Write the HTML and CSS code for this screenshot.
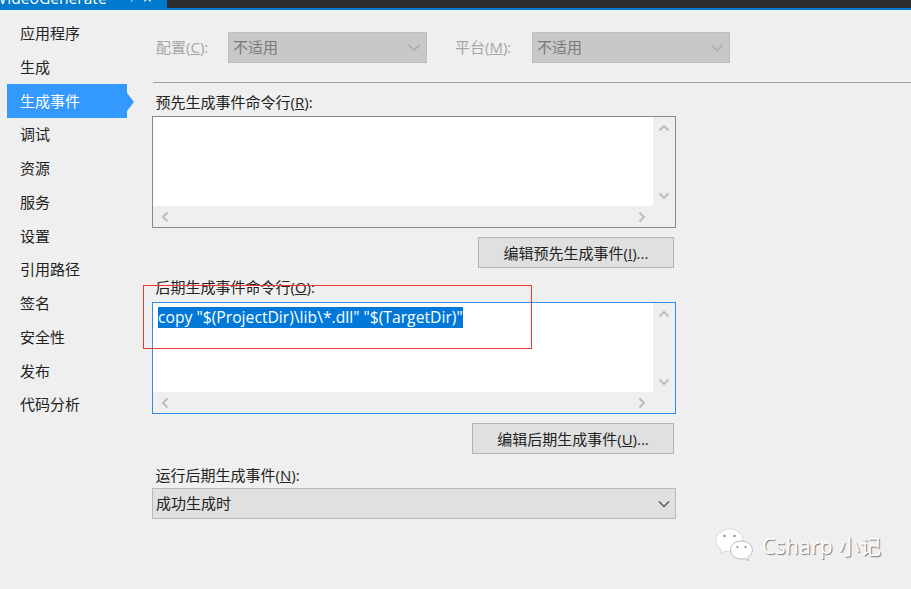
FILE: index.html
```html
<!DOCTYPE html>
<html lang="zh">
<head>
<meta charset="utf-8">
<title>生成事件</title>
<link rel="stylesheet" href="styles.css">
</head>
<body>
<header class="topbar">
  <div class="tab"><span class="tab-text">VideoGenerate</span><span class="tab-pin">⊣</span><span class="tab-close">×</span></div>
</header>
<div class="page">
  <nav class="side">
    <div class="nav-item">应用程序</div>
    <div class="nav-item">生成</div>
    <div class="nav-item active">生成事件</div>
    <div class="nav-item">调试</div>
    <div class="nav-item">资源</div>
    <div class="nav-item">服务</div>
    <div class="nav-item">设置</div>
    <div class="nav-item">引用路径</div>
    <div class="nav-item">签名</div>
    <div class="nav-item">安全性</div>
    <div class="nav-item">发布</div>
    <div class="nav-item">代码分析</div>
  </nav>
  <main class="main">
    <div class="config-row">
      <span class="config-label first">配置(<u>C</u>):</span>
      <div class="select disabled first-select"><span>不适用</span>
        <svg class="chev" width="14" height="8" viewBox="0 0 14 8"><path d="M1.500 1 7 6.500 12.500 1" fill="none" stroke="#aaa" stroke-width="1.300"/></svg></div>
      <span class="config-label second">平台(<u>M</u>):</span>
      <div class="select disabled second-select"><span>不适用</span>
        <svg class="chev" width="14" height="8" viewBox="0 0 14 8"><path d="M1.500 1 7 6.500 12.500 1" fill="none" stroke="#aaa" stroke-width="1.300"/></svg></div>
    </div>
    <div class="rule"></div>
    <div class="form">
      <label class="field-label pre-label">预先生成事件命令行(<u>R</u>):</label>
      <div class="textbox">
        <div class="text-area"></div>
        <div class="vbar">
          <svg width="12" height="8" viewBox="0 0 12 8"><path d="M1.500 6.500 6 2l4.500 4.500" fill="none" stroke="#bdbdbd" stroke-width="2"/></svg>
          <svg width="12" height="8" viewBox="0 0 12 8"><path d="M1.500 1.500 6 6l4.500-4.500" fill="none" stroke="#bdbdbd" stroke-width="2"/></svg>
        </div>
        <div class="hbar">
          <svg width="8" height="12" viewBox="0 0 8 12"><path d="M6.500 1.500 2 6l4.500 4.500" fill="none" stroke="#bdbdbd" stroke-width="2"/></svg>
          <svg width="8" height="12" viewBox="0 0 8 12"><path d="M1.500 1.500 6 6l-4.500 4.500" fill="none" stroke="#bdbdbd" stroke-width="2"/></svg>
        </div>
      </div>
      <div class="btn-row"><button class="btn pre-btn">编辑预先生成事件(<u>I</u>)...</button></div>
      <label class="field-label post-label">后期生成事件命令行(<u>O</u>):</label>
      <div class="textbox focused">
        <div class="text-area"><span class="selected">copy "$(ProjectDir)\lib\*.dll" "$(TargetDir)"</span></div>
        <div class="vbar">
          <svg width="12" height="8" viewBox="0 0 12 8"><path d="M1.500 6.500 6 2l4.500 4.500" fill="none" stroke="#bdbdbd" stroke-width="2"/></svg>
          <svg width="12" height="8" viewBox="0 0 12 8"><path d="M1.500 1.500 6 6l4.500-4.500" fill="none" stroke="#bdbdbd" stroke-width="2"/></svg>
        </div>
        <div class="hbar">
          <svg width="8" height="12" viewBox="0 0 8 12"><path d="M6.500 1.500 2 6l4.500 4.500" fill="none" stroke="#bdbdbd" stroke-width="2"/></svg>
          <svg width="8" height="12" viewBox="0 0 8 12"><path d="M1.500 1.500 6 6l-4.500 4.500" fill="none" stroke="#bdbdbd" stroke-width="2"/></svg>
        </div>
      </div>
      <div class="btn-row"><button class="btn post-btn">编辑后期生成事件(<u>U</u>)...</button></div>
      <label class="field-label run-label">运行后期生成事件(<u>N</u>):</label>
      <div class="select run-select"><span>成功生成时</span>
        <svg class="chev" width="14" height="8" viewBox="0 0 14 8"><path d="M2 1.500 7 6.500 12 1.500" fill="none" stroke="#555" stroke-width="1.300"/></svg></div>
    </div>
  </main>
</div>
<div class="red-box"></div>
<div class="watermark">
  <svg width="41" height="36" viewBox="0 0 40 36">
    <path d="M15 1C7.500 1 1.500 6.200 1.500 12.500c0 3.700 2 6.900 5.200 9l-1 4 4.700-2.500c1.500.4 3 .6 4.600.6 7.500 0 13.500-5.100 13.500-11.100S22.500 1 15 1z" fill="#fff" stroke="#d0d0d0" stroke-width=".7"/>
    <path d="M27 13c-6 0-11 4-11 9s5 9 11 9c1.200 0 2.400-.2 3.500-.5l3.800 2.300-.9-3.500c2.700-1.700 4.500-4.400 4.500-7.300 0-5-5-9-11-9z" fill="#fff" stroke="#a8a8a8" stroke-width=".8"/>
    <circle cx="10" cy="8" r="1.300" fill="#999"/><circle cx="20" cy="8" r="1.300" fill="#999"/>
    <circle cx="23" cy="19" r="1.100" fill="#888"/><circle cx="31" cy="19" r="1.100" fill="#888"/>
  </svg>
  <span class="wm-text">Csharp 小记</span>
</div>
</body>
</html>
```

FILE: styles.css
```css
* { box-sizing: border-box; }
html, body { margin: 0; padding: 0; }
body {
  width: 911px;
  height: 589px;
  overflow: hidden;
  background: #efefef;
  color: #1e1e1e;
  font-family: "Open Sans", "Noto Sans CJK SC", sans-serif;
  font-size: 14px;
  position: relative;
}
u { text-underline-offset: 1px; }

.topbar {
  height: 10px;
  background: #2d2d30;
  border-bottom: 2px solid #007acc;
  position: relative;
}
.tab {
  width: 167px;
  height: 10px;
  background: #007acc;
  color: #fff;
  line-height: 16px;
  display: flex;
  overflow: hidden;
}
.tab-text { margin-top: -10px; margin-left: -2px; height: 20px; font-size: 15.600px; }
.tab-pin { margin-top: -10px; margin-left: 17px; height: 20px; font-size: 10px; }
.tab-close { margin-top: -10px; margin-left: 10px; height: 20px; font-size: 16px; }

.page { display: flex; height: 579px; }

.side { width: 152px; padding: 7px 0 0 7px; flex: none; }
.nav-item {
  width: 120px;
  height: 33.750px;
  line-height: 33.750px;
  padding-left: 13px;
  font-size: 15px;
  color: #222;
  position: relative;
}
.nav-item.active { background: #3399ff; color: #fff; box-shadow: 0 -1px 0 #3399ff; }
.nav-item.active::after {
  content: "";
  position: absolute;
  left: 120px;
  top: 8px;
  border-left: 7px solid #3399ff;
  border-top: 9px solid transparent;
  border-bottom: 9px solid transparent;
}

.main { flex: 1; min-width: 0; padding-top: 22px; }
.config-row { display: flex; align-items: center; height: 31px; color: #a6a6a6; }
.config-row span { position: relative; top: -1px; }
.config-label { font-size: 15px; }
.config-label.first { margin-left: 4px; width: 72px; }
.config-label.second { margin-left: 28px; width: 77px; }

.select {
  display: flex;
  align-items: center;
  justify-content: space-between;
  height: 31px;
  padding: 0 5px 0 4px;
  font-size: 15px;
}
.select.disabled { background: #c8c8c8; border: 1px solid #bebebe; color: #7a7a7a; padding-left: 4px; }
.first-select { width: 199px; }
.second-select { width: 198px; }

.rule { height: 1px; background: #a0a0a0; margin: 19px 0 0 1px; }

.form { width: 524px; }
.field-label { display: block; font-size: 15px; line-height: 20px; padding-left: 3.500px; color: #222; }
.pre-label { margin-top: 9px; height: 24px; }
.post-label { margin-top: 9px; height: 25px; }
.run-label { margin-top: 11px; height: 23px; }

.textbox {
  display: grid;
  grid-template-columns: 1fr 22px;
  grid-template-rows: 1fr 21px;
  width: 524px;
  height: 112px;
  border: 1px solid #888;
  background: #efefef;
}
.textbox.focused { border-color: #2f8fe6; }
.text-area {
  background: #fff;
  padding: 4px 0 0 5px;
  font-size: 15.700px;
  line-height: 21px;
  border-radius: 0 0 2px 0;
}
.selected { background: #0078d7; color: #fff; display: inline-block; height: 21px; }
.vbar {
  display: flex;
  flex-direction: column;
  justify-content: space-between;
  align-items: center;
  padding: 7px 0 6px;
  background: #efefef;
}
.hbar {
  grid-column: 1 / 3;
  display: flex;
  justify-content: space-between;
  align-items: center;
  padding: 0 29px 0 8px;
  background: #efefef;
}

.btn-row { display: flex; justify-content: flex-end; padding: 9px 2px 0 0; }
.btn {
  height: 31px;
  background: #e0e0e0;
  border: 1px solid #b4b4b4;
  color: #222;
  font-family: inherit;
  font-size: 15px;
  padding: 0;
}
.pre-btn { width: 196px; }
.post-btn { width: 202px; }

.run-select { width: 524px; background: #e0e0e0; border: 1px solid #b9b9b9; color: #222; padding-left: 3px; padding-right: 4px; }
.run-select span { position: relative; top: -1px; }

.red-box {
  position: absolute;
  left: 143px;
  top: 285px;
  width: 389px;
  height: 64px;
  border: 1px solid #ee3333;
}

.watermark {
  position: absolute;
  left: 714px;
  top: 528px;
  display: flex;
  align-items: center;
  gap: 7px;
  height: 36px;
}
.wm-text {
  color: #fff;
  font-size: 21px;
  line-height: 36px;
  letter-spacing: .3px;
  text-shadow: 1px 1px 1px #777;
  white-space: nowrap;
}
```
